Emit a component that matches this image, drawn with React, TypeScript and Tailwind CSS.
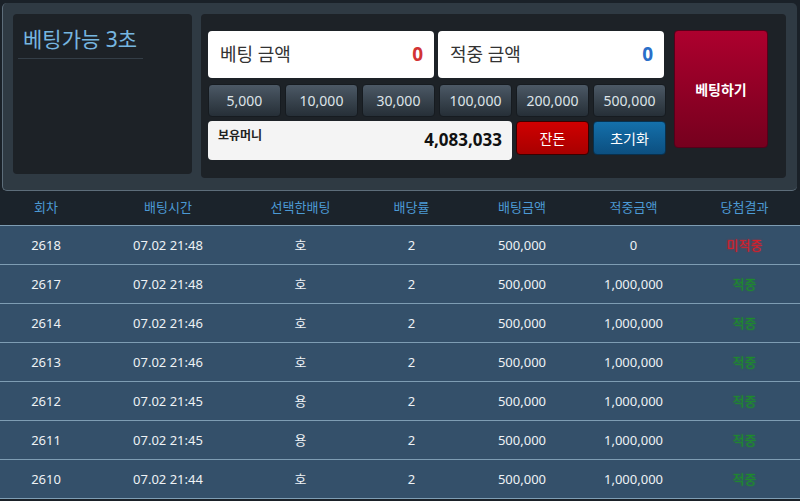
const FONT = 'font-["Noto_Sans","Noto_Sans_CJK_KR",sans-serif]';

type BetRow = {
  round: number;
  time: string;
  pick: string;
  odds: number;
  amount: string;
  win: string;
  won: boolean;
};

const CHIPS = ['5,000', '10,000', '30,000', '100,000', '200,000', '500,000'];

const ROWS: BetRow[] = [
  { round: 2618, time: '07.02 21:48', pick: '호', odds: 2, amount: '500,000', win: '0', won: false },
  { round: 2617, time: '07.02 21:48', pick: '호', odds: 2, amount: '500,000', win: '1,000,000', won: true },
  { round: 2614, time: '07.02 21:46', pick: '호', odds: 2, amount: '500,000', win: '1,000,000', won: true },
  { round: 2613, time: '07.02 21:46', pick: '호', odds: 2, amount: '500,000', win: '1,000,000', won: true },
  { round: 2612, time: '07.02 21:45', pick: '용', odds: 2, amount: '500,000', win: '1,000,000', won: true },
  { round: 2611, time: '07.02 21:45', pick: '용', odds: 2, amount: '500,000', win: '1,000,000', won: true },
  { round: 2610, time: '07.02 21:44', pick: '호', odds: 2, amount: '500,000', win: '1,000,000', won: true },
];

const COLS = 'grid grid-cols-[92px_152px_113px_109px_112px_111px_111px]';

/** Amount box - white field with label and value */
function AmountField({ label, valueClass }: { label: string; valueClass: string }) {
  return (
    <div className="flex h-[47px] w-[226px] items-center justify-between rounded-[4px] bg-white pl-[12px] pr-[11px]">
      <span className="text-[18px] text-[#333]">{label}</span>
      <span className={`text-[19px] font-bold ${valueClass}`}>0</span>
    </div>
  );
}

function ChipButton({ label }: { label: string }) {
  return (
    <button className="h-[33px] w-[73px] rounded-[4px] border border-[#161b20] bg-gradient-to-b from-[#4c5966] to-[#262f37] text-[14px] text-[#dde3e8]">
      {label}
    </button>
  );
}

function BetPanel() {
  return (
    <div className="flex h-[188px] gap-[9px] rounded-[5px] border-b border-l border-[#5d6d7a] bg-[#2f3a43] pl-[10px] pr-[11px] pt-[11px]">
      {/* countdown */}
      <div className="h-[160px] w-[181px] rounded-[4px] bg-[#1d2227]">
        <div className="ml-[5px] w-[125px] border-b border-[#343e47] pb-[6px] pl-[5px] pt-[12px] text-[21px] leading-[26px] text-[#76b6e0]">
          베팅가능 3초
        </div>
      </div>

      {/* bet controls */}
      <div className="flex h-[164px] flex-1 gap-[8px] rounded-[4px] bg-[#1d2227] pl-[7px] pr-[18px] pt-[17px]">
        <div className="flex w-[458px] flex-col">
          <div className="flex gap-[4px]">
            <AmountField label="베팅 금액" valueClass="text-[#d23434]" />
            <AmountField label="적중 금액" valueClass="text-[#2a6fc9]" />
          </div>
          <div className="mt-[6px] flex gap-[4px]">
            {CHIPS.map((chip) => (
              <ChipButton key={chip} label={chip} />
            ))}
          </div>
          <div className="mt-[4px] flex gap-[4px]">
            <div className="flex h-[39px] w-[304px] items-start justify-between rounded-[4px] bg-[#f4f4f4] pl-[10px] pr-[10px]">
              <span className="pt-[6px] text-[12px] font-bold text-[#222]">보유머니</span>
              <span className="pt-[7px] text-[17px] font-bold leading-[24px] text-[#111]">4,083,033</span>
            </div>
            <button className="h-[34px] w-[73px] rounded-[4px] border border-[#3a0000] bg-gradient-to-b from-[#d00000] to-[#a80000] text-[14px] text-white">
              잔돈
            </button>
            <button className="h-[34px] w-[73px] rounded-[4px] border border-[#08304d] bg-gradient-to-b from-[#1470ab] to-[#0c4f80] text-[14px] text-white">
              초기화
            </button>
          </div>
        </div>
        <button className="mt-[-1px] h-[118px] w-[94px] rounded-[4px] border border-[#55001a] bg-gradient-to-b from-[#ad002e] to-[#76001e] text-[14px] font-bold text-white">
          베팅하기
        </button>
      </div>
    </div>
  );
}

function HistoryTable() {
  const headers = ['회차', '배팅시간', '선택한배팅', '배당률', '배팅금액', '적중금액', '당첨결과'];
  return (
    <div>
      <div className={`${COLS} h-[35px] items-center border-b border-[#7e9db3] bg-[#1b232b] text-[13px] text-[#4c9ad5]`}>
        {headers.map((h) => (
          <div key={h} className="text-center">
            {h}
          </div>
        ))}
      </div>
      {ROWS.map((row) => (
        <div
          key={row.round}
          className={`${COLS} h-[39px] items-center border-b border-[#7e9db3] bg-[#34506a] pt-[2px] text-[13px] text-[#eef2f5]`}
        >
          <div className="text-center">{row.round}</div>
          <div className="text-center">{row.time}</div>
          <div className="text-center">{row.pick}</div>
          <div className="text-center">{row.odds}</div>
          <div className="text-center">{row.amount}</div>
          <div className="text-center">{row.win}</div>
          <div
            className={`text-center ${
              row.won
                ? 'text-[#1e8a2c] [text-shadow:0_0_2px_#1e8a2c]'
                : 'text-[#d3202c] [text-shadow:0_0_2px_#d3202c]'
            }`}
          >
            {row.won ? '적중' : '미적중'}
          </div>
        </div>
      ))}
    </div>
  );
}

export default function App() {
  return (
    <div className={`h-[501px] w-[800px] overflow-hidden bg-[#1a2128] ${FONT}`}>
      <div className="pl-[2px] pr-[3px] pt-[3px]">
        <BetPanel />
      </div>
      <HistoryTable />
    </div>
  );
}
